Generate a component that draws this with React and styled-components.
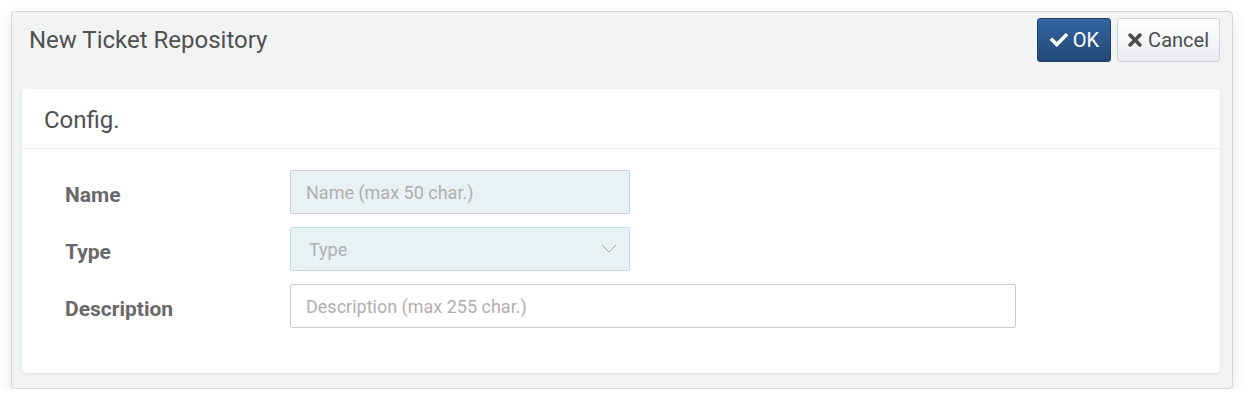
import React from 'react';
import styled, { createGlobalStyle } from 'styled-components';
import { FaCheck, FaTimes } from 'react-icons/fa';

const Global = createGlobalStyle`
  body {
    margin: 0;
    background: #ffffff;
    font-family: Roboto, "Liberation Sans", sans-serif;
  }
`

const Page = styled.div`
  padding: 11px 0 0 11px;
`

const Panel = styled.div`
  width: 1222px;
  background: #f2f4f4;
  border: 1px solid #d4d6d6;
  border-radius: 4px;
  box-shadow: 0 6px 16px rgba(0, 0, 0, 0.1);
  padding: 0 12px 15px 10px;
  box-sizing: border-box;
`

const Header = styled.div`
  display: flex;
  align-items: flex-start;
  justify-content: space-between;
  height: 77px;
`

const Title = styled.h1`
  margin: 13px 0 0 7px;
  font-size: 24px;
  font-weight: 400;
  color: #505050;
  line-height: 30px;
`

const Actions = styled.div`
  display: flex;
  gap: 6px;
  margin-top: 6px;
`

const Button = styled.button`
  height: 44px;
  display: flex;
  align-items: center;
  gap: ${p => (p.primary ? '5px' : '6px')};
  padding: ${p => (p.primary ? '0 11px 0 12px' : '0 10px')};
  border-radius: 3px;
  font-family: Roboto, "Liberation Sans", sans-serif;
  font-size: 20px;
  cursor: pointer;
  border: 1px solid ${p => (p.primary ? '#1d416b' : '#cfd2d4')};
  color: ${p => (p.primary ? '#ffffff' : '#4d4d4d')};
  background: ${p =>
    p.primary
      ? 'linear-gradient(#33659f, #224876)'
      : 'linear-gradient(#ffffff, #eaedf0)'};
  svg {
    width: ${p => (p.primary ? '18px' : '14px')};
    height: ${p => (p.primary ? '18px' : '20px')};
  }
`

const Card = styled.div`
  background: #ffffff;
  border-radius: 4px;
  box-shadow: 0 1px 3px rgba(0, 0, 0, 0.1);
  padding-bottom: 45px;
`

const CardHead = styled.div`
  height: 60px;
  border-bottom: 1px solid #ebeded;
  display: flex;
  align-items: center;
  padding: 2px 0 0 22px;
  box-sizing: border-box;
  font-size: 24px;
  color: #505050;
`

const Form = styled.div`
  display: flex;
  flex-direction: column;
  gap: 13px;
  padding: 21px 0 0 43px;
`

const Row = styled.div`
  display: grid;
  grid-template-columns: 225px 1fr;
  align-items: center;
`

const Label = styled.label`
  font-size: 21px;
  font-weight: 700;
  color: #696969;
  padding-top: 5px;
`

const Field = styled.div`
  position: relative;
  width: ${p => p.width}px;
  height: 44px;
  box-sizing: border-box;
  border: 1px solid ${p => p.border || '#cccccc'};
  border-radius: 2px;
  background: ${p => p.bg || '#ffffff'};
  display: flex;
  align-items: center;
  padding-left: ${p => p.pad || 15}px;
  font-size: 18px;
  color: #b0b0b0;
  svg {
    position: absolute;
    right: 12px;
    top: 16px;
  }
`

export default function App() {
  return (
    <Page>
      <Global />
      <Panel>
        <Header>
          <Title>New Ticket Repository</Title>
          <Actions>
            <Button primary>
              <FaCheck /> OK
            </Button>
            <Button>
              <FaTimes /> Cancel
            </Button>
          </Actions>
        </Header>
        <Card>
          <CardHead>Config.</CardHead>
          <Form>
            <Row>
              <Label>Name</Label>
              <Field width={340} bg="#e8f1f4" border="#c9d1d4">Name (max 50 char.)</Field>
            </Row>
            <Row>
              <Label>Type</Label>
              <Field width={340} bg="#e8f1f4" border="#c4dde6" pad={18}>
                Type
                <svg width="16" height="9" viewBox="0 0 16 9">
                  <path d="M1 1 L8 8 L15 1" fill="none" stroke="#a8a8a8" strokeWidth="1" />
                </svg>
              </Field>
            </Row>
            <Row>
              <Label>Description</Label>
              <Field width={726}>Description (max 255 char.)</Field>
            </Row>
          </Form>
        </Card>
      </Panel>
    </Page>
  );
}
